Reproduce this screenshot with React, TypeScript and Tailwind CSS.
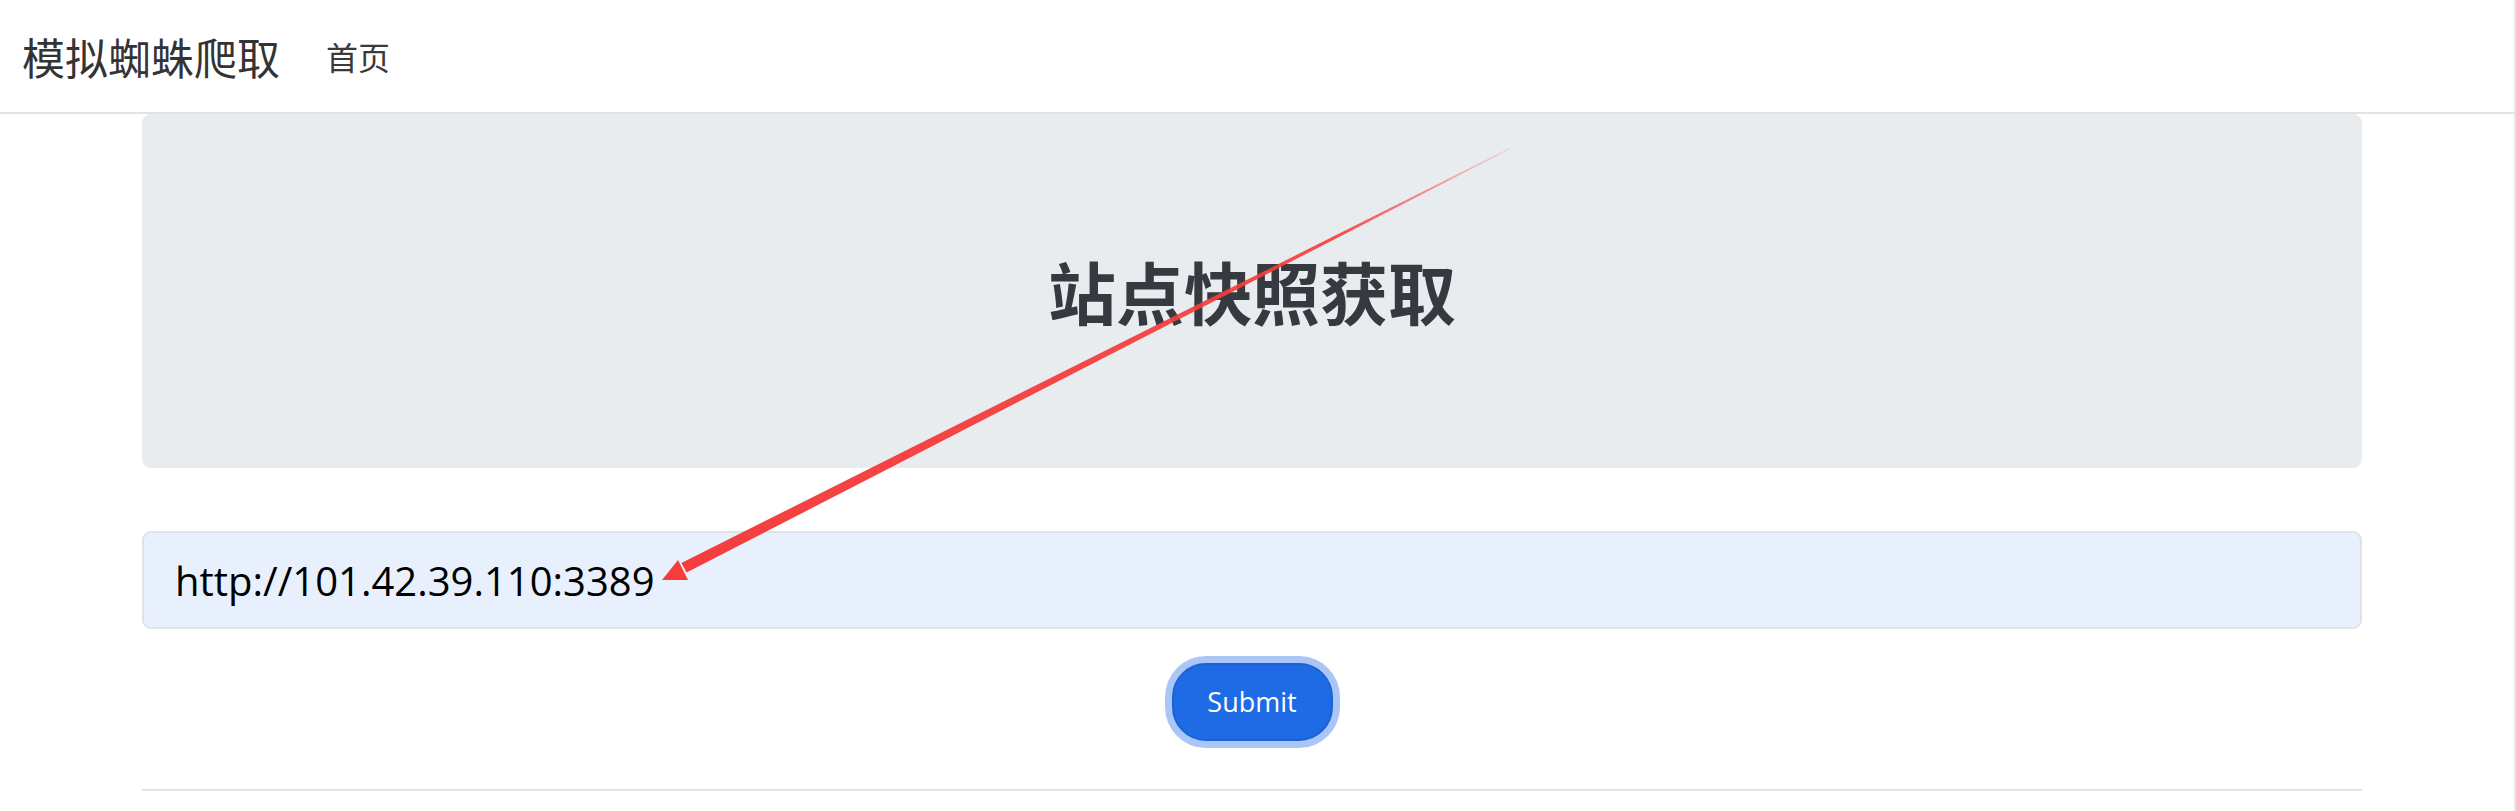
import React from "react";

const cjk = "font-['Noto_Sans_CJK_SC','Noto_Sans',sans-serif]";

function Arrow() {
  // annotation arrow drawn over the page
  return (
    <svg
      className="absolute left-0 top-0 pointer-events-none"
      width={2516}
      height={811}
      viewBox="0 0 2516 811"
    >
      <defs>
        <linearGradient id="fade" gradientUnits="userSpaceOnUse" x1="1511" y1="148" x2="662" y2="580">
          <stop offset="0" stopColor="#f43d3d" stopOpacity="0.15" />
          <stop offset="0.2" stopColor="#f43d3d" stopOpacity="0.9" />
          <stop offset="1" stopColor="#f43d3d" stopOpacity="1" />
        </linearGradient>
      </defs>
      <polygon points="1511.2,148.4 686.6,572.5 681.4,562.9 1510.8,147.6" fill="url(#fade)" />
      <polygon points="662,580 678,560 688,580" fill="#f43d3d" />
    </svg>
  );
}

export default function App() {
  return (
    <div className="relative w-[2516px] h-[811px] overflow-hidden bg-white border-r-2 border-[#e6e6e6]">
      {/* Navbar */}
      <nav className={`h-[114px] border-b-2 border-[#e3e3e3] flex items-center pl-[22px] ${cjk}`}>
        <span className="text-[43px] text-[#333] leading-none">模拟蜘蛛爬取</span>
        <a href="#" className="ml-[46px] text-[32px] text-[#3a3a3a] leading-none">
          首页
        </a>
      </nav>

      <main className="ml-[142px] w-[2220px]">
        {/* Jumbotron */}
        <div className="h-[354px] rounded-[9px] bg-[#e9ecef] flex items-center justify-center">
          <h1 className={`text-[68px] font-bold text-[#343a40] leading-none ${cjk}`}>站点快照获取</h1>
        </div>

        {/* URL input */}
        <div className="mt-[63px] h-[98px]">
          <input
            type="text"
            defaultValue="http://101.42.39.110:3389"
            className="w-full h-full rounded-[9px] border-2 border-[#dfe2e6] bg-[#e8f0fe] pl-[31px] text-[40px] text-black font-['Open_Sans',sans-serif] outline-none"
          />
        </div>

        {/* Submit */}
        <div className="mt-[34px] flex justify-center">
          <button className="w-[161px] h-[78px] rounded-[34px] bg-[#1f6be6] border-2 border-[#1b62d6] ring-[7px] ring-[#aac6f6] text-white text-[27px] font-['Open_Sans',sans-serif]">
            Submit
          </button>
        </div>

        <hr className="mt-[48px] border-t-2 border-[#e2e2e2]" />
      </main>

      <Arrow />
    </div>
  );
}
